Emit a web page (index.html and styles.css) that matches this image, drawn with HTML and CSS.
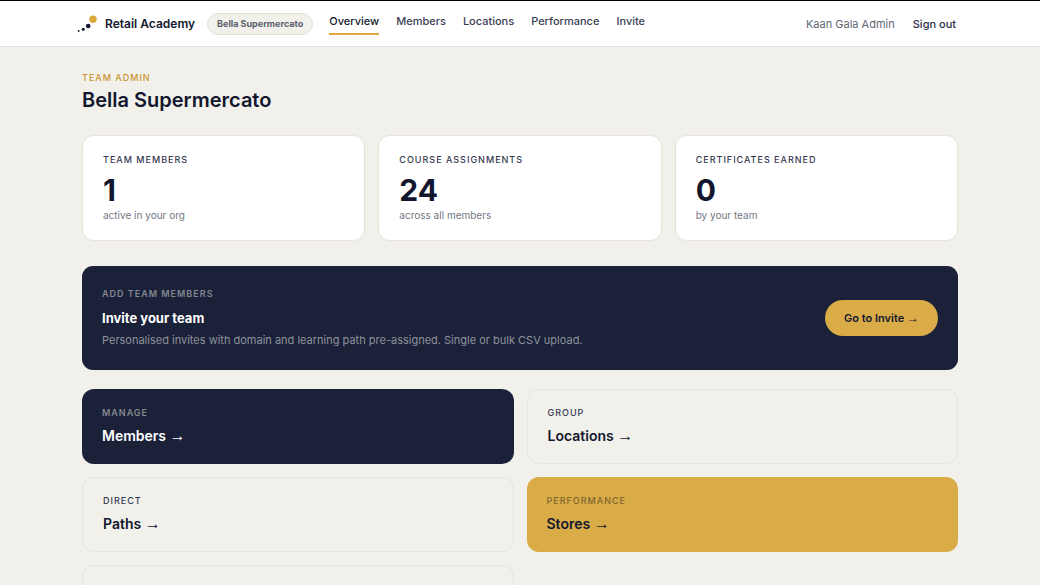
FILE: index.html
```
<!DOCTYPE html>
<html lang="en">
<head>
<meta charset="utf-8">
<meta name="viewport" content="width=device-width, initial-scale=1">
<title>Retail Academy</title>
<link rel="stylesheet" href="styles.css">
</head>
<body>
<header class="topbar">
  <div class="topbar-inner">
    <a class="brand" href="#">
      <svg class="brand-mark" width="21" height="18" viewBox="0 0 21 18" aria-hidden="true">
        <circle cx="1.7" cy="16" r="0.9" fill="#10162e"/>
        <circle cx="6.2" cy="14.3" r="1.5" fill="#10162e"/>
        <circle cx="11.2" cy="11" r="2.3" fill="#10162e"/>
        <circle cx="16" cy="4.2" r="3.7" fill="#d9a83c"/>
      </svg>
      <span>Retail Academy</span>
    </a>
    <span class="org">Bella Supermercato</span>
    <nav class="nav">
      <a class="nav-link active" href="#" aria-current="page">Overview</a>
      <a class="nav-link" href="#">Members</a>
      <a class="nav-link" href="#">Locations</a>
      <a class="nav-link" href="#">Performance</a>
      <a class="nav-link" href="#">Invite</a>
    </nav>
    <div class="account">
      <span class="user">Kaan Gala Admin</span>
      <button class="signout" type="button">Sign out</button>
    </div>
  </div>
</header>
<main class="page">
  <p class="label label-gold">TEAM ADMIN</p>
  <h1 class="title">Bella Supermercato</h1>
  <section class="stats">
    <article class="stat">
      <h2 class="label">TEAM MEMBERS</h2>
      <p class="value">1</p>
      <p class="note">active in your org</p>
    </article>
    <article class="stat">
      <h2 class="label">COURSE ASSIGNMENTS</h2>
      <p class="value">24</p>
      <p class="note">across all members</p>
    </article>
    <article class="stat">
      <h2 class="label">CERTIFICATES EARNED</h2>
      <p class="value">0</p>
      <p class="note">by your team</p>
    </article>
  </section>
  <section class="banner">
    <div>
      <p class="label">ADD TEAM MEMBERS</p>
      <h2 class="banner-title">Invite your team</h2>
      <p class="banner-text">Personalised invites with domain and learning path pre-assigned. Single or bulk CSV upload.</p>
    </div>
    <a class="cta" href="#">Go to Invite <span class="arrow">→</span></a>
  </section>
  <section class="tiles">
    <a class="tile tile-navy" href="#"><span class="label">MANAGE</span><span class="tile-title">Members <span class="arrow">→</span></span></a>
    <a class="tile" href="#"><span class="label">GROUP</span><span class="tile-title">Locations <span class="arrow">→</span></span></a>
    <a class="tile" href="#"><span class="label">DIRECT</span><span class="tile-title">Paths <span class="arrow">→</span></span></a>
    <a class="tile tile-gold" href="#"><span class="label">PERFORMANCE</span><span class="tile-title">Stores <span class="arrow">→</span></span></a>
    <a class="tile" href="#"></a>
  </section>
</main>
</body>
</html>
```
FILE: styles.css
```
* { box-sizing: border-box; }

html { scrollbar-width: none; }

body {
  margin: 0;
  background: #f1f0eb;
  color: #12172e;
  font-family: Inter, "Liberation Sans", sans-serif;
  font-size: 11px;
}

h1, h2, p { margin: 0; }
a { color: inherit; text-decoration: none; }

.topbar {
  background: #fff;
  border-top: 1px solid #000;
  border-bottom: 1px solid #e2e2de;
}

.topbar-inner {
  display: flex;
  align-items: center;
  max-width: 886px;
  min-height: 45px;
  margin: 0 auto;
}

.brand {
  display: flex;
  align-items: center;
  gap: 7px;
  font-size: 12px;
  font-weight: 600;
  white-space: nowrap;
}

.org {
  margin-left: 12px;
  padding: 0 9px;
  border: 1px solid #e2e1d9;
  border-radius: 11px;
  background: #f1f0eb;
  color: #5b5f6d;
  font-size: 9px;
  font-weight: 700;
  line-height: 20px;
  white-space: nowrap;
}

.nav {
  display: flex;
  gap: 17px;
  margin-left: 16px;
}

.nav-link {
  padding-bottom: 4px;
  border-bottom: 2px solid transparent;
  color: #3b4056;
  font-weight: 500;
  line-height: 16px;
}

.active {
  border-color: #dfa93f;
  color: #12172e;
}

.account {
  display: flex;
  align-items: center;
  gap: 18px;
  margin-left: auto;
  margin-right: 7px;
}

.user { color: #636774; }

.signout {
  padding: 0;
  border: 0;
  background: none;
  color: #2b3048;
  font: inherit;
  font-weight: 500;
}

.page {
  max-width: 876px;
  margin: 0 auto;
  padding: 25px 0;
}

.label {
  display: block;
  color: #343950;
  font-size: 9px;
  font-weight: 500;
  letter-spacing: 1px;
  line-height: 12px;
}

.label-gold { color: #c8962f; }

.title {
  margin: 4px 0 23px;
  font-size: 20px;
  font-weight: 600;
  line-height: 24px;
}

.stats {
  display: grid;
  grid-template-columns: repeat(3, 1fr);
  gap: 13px;
}

.stat {
  padding: 18px 20px;
  border: 1px solid #e5e3db;
  border-radius: 12px;
  background: #fff;
}

.value {
  margin: 8px 0 2px;
  font-size: 30px;
  font-weight: 700;
  line-height: 32px;
}

.note {
  color: #747883;
  font-size: 10px;
  line-height: 14px;
}

.banner {
  display: flex;
  align-items: center;
  justify-content: space-between;
  gap: 20px;
  margin: 25px 0 19px;
  padding: 22px 20px 23px;
  border-radius: 11px;
  background: #1a2139;
}

.banner .label, .tile-navy .label { color: #858891; font-weight: 600; }

.banner-title {
  margin: 8px 0 5px;
  color: #fff;
  font-size: 13px;
  font-weight: 700;
  line-height: 20px;
}

.banner-text {
  color: #8f929c;
  line-height: 14px;
}

.cta {
  padding: 0 19px;
  border-radius: 18px;
  background: #d9ac48;
  font-size: 11px;
  font-weight: 600;
  line-height: 36px;
  white-space: nowrap;
}

.arrow {
  font-family: "Liberation Serif", serif;
  font-size: 16px;
  font-weight: 400;
  line-height: 1;
}

.cta .arrow { font-size: 12px; }

.tiles {
  display: grid;
  grid-template-columns: repeat(2, 1fr);
  gap: 13px;
}

.tile {
  min-height: 75px;
  padding: 17px 20px;
  border: 1px solid #e5e4de;
  border-radius: 12px;
}

.tile-title {
  display: block;
  margin-top: 7px;
  font-size: 14px;
  font-weight: 600;
  line-height: 20px;
}

.tile-navy, .tile-gold {
  padding: 18px 20px;
  border: 0;
}

.tile-navy { background: #1a2139; color: #fff; }
.tile-gold { background: #d9ac48; }
.tile-gold .label { color: #7f662f; }
```
